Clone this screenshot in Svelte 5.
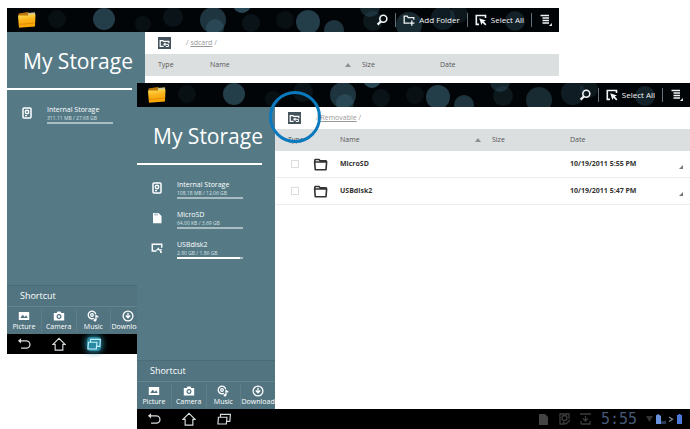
<script>
  const shortcuts = [
    { icon: 'picture', label: 'Picture' },
    { icon: 'camera', label: 'Camera' },
    { icon: 'music', label: 'Music' },
    { icon: 'download', label: 'Download' }
  ];

  const screens = [
    {
      id: 'back',
      path: 'sdcard',
      addFolder: true,
      recentActive: true,
      status: false,
      storages: [{ icon: 'disk', name: 'Internal Storage', usage: '311.11 MB / 27.68 GB', used: 0 }],
      files: []
    },
    {
      id: 'front',
      path: 'Removable',
      addFolder: false,
      recentActive: false,
      status: true,
      storages: [
        { icon: 'disk', name: 'Internal Storage', usage: '108.18 MB / 12.06 GB', used: 0 },
        { icon: 'card', name: 'MicroSD', usage: '64.00 KB / 3.69 GB', used: 0 },
        { icon: 'usb', name: 'USBdisk2', usage: '2.90 GB / 1.86 GB', used: 95 }
      ],
      files: [
        { name: 'MicroSD', date: '10/19/2011 5:55 PM' },
        { name: 'USBdisk2', date: '10/19/2011 5:47 PM' }
      ]
    }
  ];

  const bokeh = [
    [50, 11, 9, 0.12], [97, 11, 11, 0.6], [136, 16, 8, 0.12], [166, 9, 10, 0.15],
    [206, 12, 13, 0.5], [208, 20, 9, 0.4], [235, -4, 9, 0.7], [244, 15, 9, 0.15],
    [278, 12, 9, 0.12], [301, 14, 12, 0.6], [327, 22, 10, 0.5], [363, -1, 10, 0.35],
    [366, 13, 10, 0.2], [402, 17, 13, 0.4], [436, 10, 12, 0.25], [452, 6, 9, 0.2], [508, 13, 10, 0.3]
  ];
</script>

{#snippet icon(name)}
  <svg class="icon" viewBox="0 0 12 12" aria-hidden="true" fill="none" stroke="currentColor" stroke-width="1.3">
    {#if name === 'search'}
      <circle cx="7.3" cy="4.8" r="3.5" stroke-width="1.6" /><path d="M4.8 7.5 1.6 10.6" stroke-width="2.2" />
    {:else if name === 'add'}
      <path d="M6 9.2H1.2V2.2h3l1 1.4h5.6v2.2M8.8 6.6v5.2M6.2 9.2h5.2" />
    {:else if name === 'select'}
      <path d="M4 10.400H1.300V1.500h9.200v2.500" stroke-width="1.600" /><path d="m4.200 4.200 6.800 2.200-2.200 1.200 2.600 2.700-1.200 1.200-2.600-2.700-1.200 2.300z" fill="currentColor" stroke="none" />
    {:else if name === 'menu'}
      <path d="M.5 1.500h8.500M2.500 4h6.500M2.500 6.500h6.500M2.500 9h6.500" /><path d="M11.900 9v2.900H9z" fill="currentColor" stroke="none" />
    {:else if name === 'disk'}
      <rect x="2" y="1" width="8" height="10" rx="1" stroke-width="1.500" /><circle cx="6" cy="5" r="1.700" stroke-width="1.400" /><path d="M4 8.600h2" />
    {:else if name === 'card'}
      <path d="M2 1h5.500L10.500 4v7.200H2z" fill="currentColor" stroke="none" /><path d="M4 1.500v2M6 1.500v2" stroke="#557a86" stroke-width=".8" />
    {:else if name === 'usb'}
      <path d="M5.500 9H1.300V2.200h9.400v3.500" stroke-width="1.500" /><path d="M5.500 7.800h5.500M8 5.800 6 7.800h2.500l1.800 2.600" stroke-width="1.100" /><circle cx="10" cy="10.200" r=".9" fill="currentColor" stroke="none" />
    {:else if name === 'picture'}
      <path fill-rule="evenodd" d="M.8 2h10.400v8H.8zM2.300 8h7.400L8.200 5.300 6.800 7 4.600 4.800z" fill="currentColor" stroke="none" />
    {:else if name === 'camera'}
      <path fill-rule="evenodd" d="M.8 3h2.900l.8-1.500h3L8.300 3h2.900v7.500H.8zM6 4a2.500 2.500 0 1 0 .01 0z" fill="currentColor" stroke="none" /><circle cx="6" cy="6.500" r="1.200" fill="currentColor" stroke="none" />
    {:else if name === 'music'}
      <path d="M7 8.200A3.800 3.800 0 1 1 8.700 4" /><circle cx="5" cy="5" r="1.300" /><path d="M9 10V5.500l2.300 1.700" /><circle cx="8" cy="10.200" r="1.300" fill="currentColor" stroke="none" />
    {:else if name === 'download'}
      <circle cx="6" cy="6" r="4.900" /><path d="M6 2.800v4.500M3.800 5.500 6 7.800l2.200-2.300" />
    {:else if name === 'folder'}
      <path d="M1.300 3.700 1.700 2h3.100l.9 1h4.800l.4 1-.5 6.200H1.800zM1.300 4h9.500" stroke-linejoin="round" stroke-width="1.300" />
    {:else if name === 'up'}
      <path d="M5 9.200H1.300V2.800h3l.8.900h5.600v2" stroke-width="1.300" /><path d="M5.500 6.800h3.700a1.200 1.200 0 0 1 0 2.600H7.500M7 5.300 5.300 6.800 7 8.300" stroke-width="1.100" />
    {:else if name === 'back'}
      <path d="M2 3.300h6a3 3 0 0 1 0 6.200H3.500" stroke-width="1.100" /><path d="M3.500 1v4.600L.8 3.300z" fill="currentColor" stroke="none" />
    {:else if name === 'home'}
      <path d="M.8 6.300 6 1.200l5.200 5.100H9.300v4.900H2.700V6.300z" stroke-width="1" />
    {:else if name === 'recent'}
      <path d="M1.200 4.500h7.300L8 10.300H.8zM3 4.300V2h8.500L11 8H8.600" stroke-width="1" />
    {/if}
  </svg>
{/snippet}

<div class="stage">
  {#each screens as s (s.id)}
    <section class="screen {s.id}" aria-label={s.path}>
      <header class="toolbar">
        <svg class="bokeh" aria-hidden="true">
          {#each bokeh as [x, y, r, o]}
            <circle cx={x} cy={y} {r} opacity={o} />
          {/each}
        </svg>
        <svg class="logo" viewBox="0 0 20 18" aria-hidden="true">
          <defs>
            <linearGradient id="gold-{s.id}" x2="0.2" y2="1">
              <stop offset="0" stop-color="#ffe15a" /><stop offset=".5" stop-color="#fbb21a" /><stop offset="1" stop-color="#f7a400" />
            </linearGradient>
          </defs>
          <path d="M1.500 2.500 11 1l1 1 6-.5V15l-16 1z" fill="#b9770c" />
          <path d="m11 2 7-.5V4l-7 .5z" fill="#c9c4a4" />
          <path d="M1 4.500h10l1.500-1.300H18.500L18 15.500 2 16.800z" fill="url(#gold-{s.id})" />
          <path d="M1.800 13.500 18 12" stroke="#e38b05" />
        </svg>
        <nav class="actions">
          <button aria-label="Search">{@render icon('search')}</button>
          {#if s.addFolder}
            <button>{@render icon('add')}Add Folder</button>
          {/if}
          <button>{@render icon('select')}Select All</button>
          <button aria-label="Menu">{@render icon('menu')}</button>
        </nav>
      </header>

      <div class="body">
        <aside>
          <h1>My Storage</h1>
          <ul class="storages">
            {#each s.storages as d}
              <li>
                {@render icon(d.icon)}
                <div class="device">
                  <strong>{d.name}</strong>
                  <small>{d.usage}</small>
                  <div class="meter"><div style="width: {d.used}%"></div></div>
                </div>
              </li>
            {/each}
          </ul>
          <div class="shortcuts">
            <h2>Shortcut</h2>
            <nav>
              {#each shortcuts as c}
                <button>{@render icon(c.icon)}<span>{c.label}</span></button>
              {/each}
            </nav>
          </div>
        </aside>

        <main>
          <div class="path">
            <button class="up" aria-label="Up one folder">{@render icon('up')}</button>
            <span>/ <a href="#{s.path}">{s.path}</a> /</span>
          </div>
          <table>
            <colgroup><col class="c-type" /><col class="c-icon" /><col class="c-name" /><col class="c-size" /><col /></colgroup>
            <thead>
              <tr>
                <th colspan="2">Type</th>
                <th><div class="sorted">Name<i></i></div></th>
                <th>Size</th>
                <th>Date</th>
              </tr>
            </thead>
            <tbody>
              {#each s.files as f}
                <tr>
                  <td><input type="checkbox" aria-label="Select {f.name}" /></td>
                  <td class="folder">{@render icon('folder')}</td>
                  <td>{f.name}</td>
                  <td></td>
                  <td><div class="date">{f.date}<i></i></div></td>
                </tr>
              {/each}
            </tbody>
          </table>
        </main>
      </div>

      <footer>
        <button aria-label="Back">{@render icon('back')}</button>
        <button aria-label="Home">{@render icon('home')}</button>
        <button aria-label="Recent apps" class:active={s.recentActive}>{@render icon('recent')}</button>
        {#if s.status}
          <div class="status">
            <svg class="notices" viewBox="0 0 54 14" aria-hidden="true" fill="none" stroke="#3c3c3c" stroke-width="1.3">
              <path d="M1 2h6l3 3v8H1z" fill="#444" stroke="none" />
              <path d="M27 12h-5V2h9v5" /><circle cx="26.5" cy="6" r="2.5" /><path d="m25 10 3 2 4-4" />
              <path d="M42 2h11M43 12h9V9M43 12V9M47.5 4v5M45 6.500l2.500 2.500L50 6.500" />
            </svg>
            <time>5:55</time>
            <svg class="signals" viewBox="0 0 38 14" aria-hidden="true">
              <path d="M0 4h7L3.500 10z" fill="#333" />
              <path d="M10 3.500 12 2l3 2v8h-5z" fill="#6a92dc" /><path d="M15 9h5v3h-5z" fill="#2b3a59" />
              <path d="m23 5 3.500 2.200L23 9.500" fill="none" stroke="#7b8490" stroke-width="1.3" />
              <path d="M31 3h1.500V2h2v1H36v9h-5z" fill="#4c78d8" />
            </svg>
          </div>
        {/if}
      </footer>
    </section>
  {/each}
  <div class="callout"></div>
</div>

<style>
  :global(body) { margin: 0; background: #fff; }
  .stage { position: relative; min-height: 429px; font-family: "Open Sans", "Noto Sans", sans-serif; font-size: 8px; line-height: 10px; color: #444; overflow: hidden; }
  .screen { position: absolute; display: flex; flex-direction: column; min-height: 346px; background: #fff; }
  .back { left: 7px; right: 131px; top: 8px; }
  .front { left: 137px; right: 0; top: 83px; }
  button { display: flex; align-items: center; margin: 0; padding: 0; border: 0; background: none; color: inherit; font: inherit; }
  .icon { display: block; flex: none; width: 12px; height: 12px; }

  .toolbar { position: relative; display: flex; justify-content: space-between; align-items: center; height: 24px; padding-left: 10px; background: #020507; color: #f2f5f6; overflow: hidden; }
  .bokeh { position: absolute; inset: 0; width: 100%; height: 100%; fill: #3a6376; }
  .logo { position: relative; width: 20px; height: 18px; }
  .actions { position: relative; display: flex; }
  .actions button { height: 14px; gap: 4px; padding: 0 7px; }
  .actions button + button { border-left: 1px solid #65717a; }
  .actions button:last-child { padding-left: 8px; }

  .body { display: flex; flex: 1; min-height: 0; }
  aside { display: flex; flex-direction: column; flex: none; width: 138px; background: #557a86; color: #fff; }
  h1 { margin: 0 13px 0 0; padding: 15px 0 13px 16px; border-bottom: 2px solid #fff; font-size: 21px; line-height: 28px; font-weight: 400; white-space: nowrap; }
  .storages { flex: 1; margin: 0; padding: 15px 0 0 14px; list-style: none; }
  .storages li { display: flex; gap: 14px; height: 30px; }
  .storages .icon { margin-top: 2px; }
  .device { width: 66px; }
  strong, small { display: block; white-space: nowrap; }
  strong { font-size: 7px; line-height: 10px; font-weight: 400; }
  small { font-size: 5px; line-height: 7px; color: #d5e0e3; }
  .meter { height: 2px; background: #a9bcc2; }
  .meter div { height: 2px; background: #fff; }
  .shortcuts { border-top: 1px solid #4a6c77; background: #527480; }
  h2 { margin: 0; padding-left: 13px; font-size: 9px; line-height: 20px; font-weight: 400; }
  .shortcuts nav { display: flex; border-top: 1px solid #638590; padding: 2px 0; }
  .shortcuts button { flex: 1 1 0; flex-direction: column; min-width: 0; padding: 1px 0; font-size: 7px; line-height: 9px; }
  .shortcuts button + button { border-left: 1px solid #5e7f8a; }

  main { flex: 1; min-width: 0; }
  .path { display: flex; align-items: center; gap: 15px; height: 22px; padding-left: 13px; font-size: 7px; color: #999; }
  .up { justify-content: center; width: 13px; height: 12px; background: #45545c; color: #fff; }
  .up .icon { width: 11px; height: 11px; }
  a { color: #999; }
  table { width: 100%; table-layout: fixed; border-collapse: collapse; }
  .c-type { width: 38px; }
  .c-icon { width: 27px; }
  .c-name { width: 152px; }
  .c-size { width: 78px; }
  th, td { padding: 0; text-align: left; font-size: 7px; }
  th { height: 22px; background: #dcdfe0; font-weight: 400; color: #555; }
  th:first-child { padding-left: 13px; }
  td { height: 26px; border-bottom: 1px solid #ececec; font-weight: 700; color: #333; }
  td:first-child { padding-left: 16px; }
  input { display: block; appearance: none; width: 8px; height: 8px; margin: 0; border: 1px solid #ddd; }
  .folder .icon { width: 15px; height: 15px; }
  .sorted { display: flex; align-items: center; justify-content: space-between; padding-right: 11px; }
  .sorted i { border: 3px solid transparent; border-top: 0; border-bottom: 4px solid #8a9194; }
  .date { display: flex; justify-content: space-between; align-items: center; padding-right: 7px; }
  .date i { margin-top: 6px; border-left: 4px solid transparent; border-bottom: 4px solid #777; }

  footer { display: flex; align-items: center; gap: 21px; height: 20px; padding: 0 6px 0 10px; background: #000; color: #d8dcde; }
  footer .icon { width: 14px; height: 14px; }
  .active { border-radius: 4px; color: #bdf1ff; background: #2a8aa2; box-shadow: 0 0 6px 1px #2a8aa2; }
  .status { display: flex; align-items: center; gap: 9px; margin-left: auto; }
  .notices { width: 54px; height: 14px; }
  time { font-family: "DejaVu Sans Mono", monospace; font-size: 15px; line-height: 18px; color: #465a76; }
  .signals { width: 38px; height: 14px; }
  .callout { position: absolute; left: 269px; top: 91px; width: 46px; height: 46px; border: 3px solid #0b79bd; border-radius: 50%; pointer-events: none; }
</style>
